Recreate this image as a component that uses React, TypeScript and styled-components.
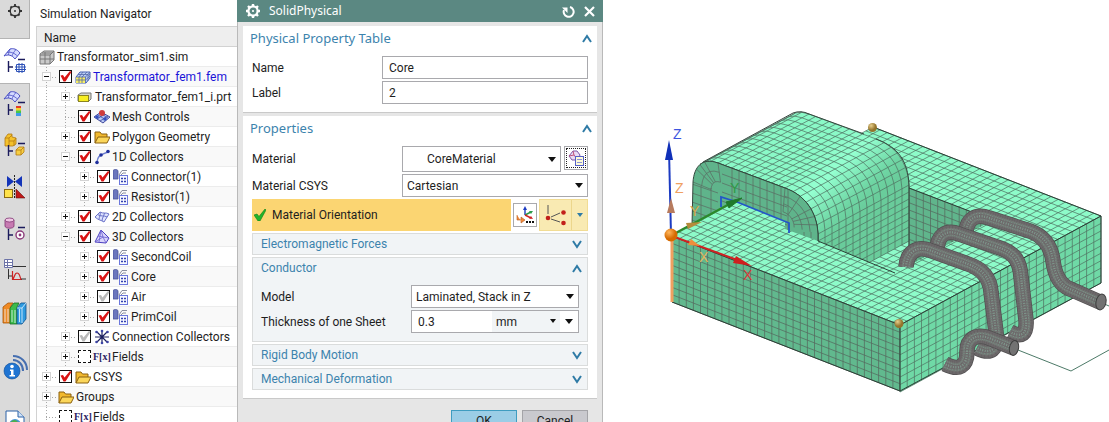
import React from "react";
import styled, { createGlobalStyle, css } from "styled-components";

const GlobalStyle = createGlobalStyle`
  *, *::before, *::after { box-sizing: border-box; }
  body {
    margin: 0;
    background: #fff;
    color: #1e1e1e;
    font: 12px/20px Roboto, "Noto Sans", sans-serif;
  }
  button, input, select { font: inherit; color: inherit; margin: 0; }
`;

const Page = styled.div`
  display: flex;
  align-items: stretch;
  height: 100vh;
  overflow: hidden;
`;

/* ---------- resource bar ---------- */

const ResourceBar = styled.nav`
  flex: none;
  display: flex;
  flex-direction: column;
  width: 30px;
  background: #dadada;
  border-right: 1px solid #b4b4b4;
`;

const ResourceTab = styled.button<{ $active?: boolean; $tall?: number }>`
  flex: none;
  display: grid;
  place-items: center;
  width: 100%;
  height: ${(p) => p.$tall ?? 42}px;
  padding: 0;
  border: 0;
  background: ${(p) => (p.$active ? "#fff" : "transparent")};
  ${(p) =>
    p.$active &&
    css`
      width: 30px;
      border-top: 1px solid #b4b4b4;
      border-bottom: 1px solid #b4b4b4;
    `}
  svg { display: block; overflow: visible; }
`;

/* ---------- navigator ---------- */

const Navigator = styled.section`
  flex: none;
  width: 207px;
  padding-left: 6px;
  background: #fff;
`;

const NavTitle = styled.h1`
  margin: 0;
  padding: 4px 4px 2px;
  height: 26px;
  font-size: 12px;
  font-weight: 400;
  line-height: 20px;
`;

const NavHeader = styled.div`
  height: 21px;
  padding-left: 7px;
  border: 1px solid #d2d2d2;
  border-right: 0;
  background: #eeeeee;
  line-height: 22px;
`;

const Tree = styled.ul`
  margin: 0;
  padding: 0;
  list-style: none;
  border-left: 1px solid #d2d2d2;
`;

const TreeRow = styled.li<{ $alt: boolean }>`
  display: flex;
  align-items: center;
  height: 20px;
  background: ${(p) => (p.$alt ? "#f9f9f9" : "#fff")};
  border-bottom: 1px solid #ececec;
  white-space: nowrap;
`;

const Guide = styled.span<{ $line?: boolean; $end?: boolean }>`
  flex: none;
  display: grid;
  place-items: center;
  width: 19px;
  height: 20px;
  ${(p) =>
    p.$line &&
    css`
      background: repeating-linear-gradient(#a8a8a8 0 1px, transparent 1px 3px) 9px 0 / 1px 100% no-repeat;
    `}
  ${(p) =>
    p.$end &&
    css`
      background:
        repeating-linear-gradient(#a8a8a8 0 1px, transparent 1px 3px) 9px 0 / 1px 100% no-repeat,
        repeating-linear-gradient(90deg, #a8a8a8 0 1px, transparent 1px 3px) 9px 10px / 10px 1px no-repeat;
    `}
`;

const Expander = styled.button`
  width: 9px;
  height: 9px;
  padding: 0;
  border: 1px solid #d4d4d4;
  background: #fff;
  svg { display: block; }
`;

const Tick = styled.label<{ $dotted?: boolean }>`
  flex: none;
  display: grid;
  width: 13px;
  height: 13px;
  margin: 0 1px 0 3px;
  input, svg { grid-area: 1 / 1; }
  input {
    appearance: none;
    width: 13px;
    height: 13px;
    background: #fff;
    border: ${(p) => (p.$dotted ? "1px dashed #111" : "1px solid #111")};
  }
  svg { z-index: 1; pointer-events: none; }
`;

const IconSlot = styled.span`
  flex: none;
  display: grid;
  place-items: center;
  width: 17px;
  height: 17px;
  margin: 0 1px;
  svg { display: block; }
`;

const TreeText = styled.span<{ $blue?: boolean }>`
  padding-left: 1px;
  line-height: 22px;
  color: ${(p) => (p.$blue ? "#1a14d8" : "#1e1e1e")};
`;

const Fx = styled.span`
  font: bold 10px/16px "Liberation Serif", serif;
  color: #2b1d63;
`;

/* ---------- dialog ---------- */

const Dialog = styled.form`
  flex: none;
  display: flex;
  flex-direction: column;
  width: 366px;
  background: #e6e6e6;
  border-left: 1px solid #b9b9b9;
  border-right: 1px solid #b9b9b9;
`;

const TitleBar = styled.header`
  flex: none;
  display: flex;
  align-items: center;
  height: 22px;
  margin: 0 -1px;
  padding: 0 8px 0 9px;
  gap: 9px;
  background: #5b8882;
  color: #fff;
  svg { display: block; }
`;

const TitleText = styled.h2`
  flex: 1;
  margin: 0;
  font: 400 12px/20px "Noto Sans", sans-serif;
`;

const BareButton = styled.button`
  display: grid;
  place-items: center;
  padding: 0;
  border: 0;
  background: none;
  color: inherit;
`;

const Panels = styled.div`
  display: flex;
  flex-direction: column;
  gap: 3px;
  padding: 4px 5px 11px;
`;

const Panel = styled.section`
  padding: 0 9px 8px;
  background: #fff;
  border-bottom: 1px solid #c9c9c9;
`;

const PanelHead = styled.div`
  display: flex;
  align-items: center;
  justify-content: space-between;
  height: 24px;
  margin: 0 -4px 6px -2px;
  color: #3c83ad;
  h3 { margin: 0; font: 400 13px/24px "Noto Sans", sans-serif; }
`;

const Rows = styled.div`
  display: flex;
  flex-direction: column;
  gap: 2px;
`;

const Row = styled.div<{ $split: number }>`
  display: grid;
  grid-template-columns: ${(p) => p.$split}px minmax(0, 1fr);
  align-items: center;
`;

const fieldBox = css`
  width: 100%;
  height: 23px;
  border: 1px solid #a9a9ad;
  border-radius: 0;
  background: #fff;
  outline: 0;
`;

const TextBox = styled.input`
  ${fieldBox}
  padding: 0 6px;
`;

const Pair = styled.div`
  display: grid;
  grid-template-columns: 1fr 24px;
  gap: 3px;
`;

const SelectWrap = styled.span<{ $pad?: number; $h?: number }>`
  display: grid;
  align-items: center;
  select, svg { grid-area: 1 / 1; }
  select {
    ${fieldBox}
    height: ${(p) => p.$h ?? 23}px;
    padding: 0 20px 0 ${(p) => p.$pad ?? 4}px;
    appearance: none;
  }
  svg { justify-self: end; margin-right: 5px; pointer-events: none; }
`;

const ToolButton = styled.button<{ $dotted?: boolean }>`
  display: grid;
  place-items: center;
  width: 24px;
  height: 24px;
  padding: 0;
  border: 1px solid #a9a9ad;
  background: #fff;
  outline: ${(p) => (p.$dotted ? "1px dotted #222" : "0")};
  outline-offset: -3px;
`;

const PickRow = styled.div`
  display: grid;
  grid-template-columns: 1fr 24px 49px;
  gap: 2px;
  align-items: center;
  height: 32px;
`;

const PickLabel = styled.div`
  display: flex;
  align-items: center;
  gap: 6px;
  height: 32px;
  padding-left: 2px;
  background: #fbd572;
`;

const SplitButton = styled.div`
  display: grid;
  grid-template-columns: 31px 1fr;
  height: 32px;
  border: 1px solid #f1dc94;
  background: #f9eab2;
  button + button { border-left: 1px solid #ecd68c; }
`;

const Group = styled.section`
  border: 1px solid #dadcdc;
  background: #f1f4f6;
`;

const GroupHead = styled.div`
  display: flex;
  align-items: center;
  justify-content: space-between;
  height: 20px;
  padding: 0 5px 0 8px;
  color: #3c83ad;
  h4 { margin: 0; font-size: 12px; font-weight: 400; }
`;

const GroupBody = styled(Rows)`
  padding: 7px 8px 8px;
`;

const UnitField = styled.div`
  display: grid;
  grid-template-columns: 80px 1fr 18px;
  ${fieldBox}
  input { min-width: 0; border: 0; padding: 0 6px; background: none; outline: 0; height: 21px; }
  ${SelectWrap} select { height: 21px; border: 0; background: #f1f4f6; }
  ${SelectWrap} svg { margin-right: 3px; }
`;

const Actions = styled.footer`
  display: flex;
  justify-content: flex-end;
  gap: 5px;
  padding-right: 14px;
`;

const ActionButton = styled.button<{ $primary?: boolean }>`
  width: 66px;
  height: 22px;
  padding: 0;
  line-height: 20px;
  border: 1px solid ${(p) => (p.$primary ? "#3f9cc0" : "#a4a4a8")};
  background: ${(p) => (p.$primary ? "#9bcde6" : "#c9c9ce")};
`;

const Viewport = styled.main`
  flex: 1;
  min-width: 0;
  background: #fff;
  svg { display: block; width: 100%; }
`;

/* ---------- small drawings ---------- */

const Chevron = ({ up }: { up?: boolean }) => (
  <svg width="10" height="9" viewBox="0 0 10 9" fill="none" stroke="#2f7ba6" strokeWidth="2">
    <path d={up ? "M1 8 5 2 9 8" : "M1 1 5 7 9 1"} />
  </svg>
);

const Caret = ({ color = "#111", small = false }) => (
  <svg width="8" height="5" viewBox="0 0 8 5">
    <path d={small ? "M1 0H7L4 4Z" : "M0 0H8L4 5Z"} fill={color} />
  </svg>
);

const Gear = ({ color }: { color: string }) => (
  <svg width="14" height="14" viewBox="0 0 14 14" fill="none" stroke={color}>
    <circle cx="7" cy="7" r="4.6" strokeWidth="2.2" />
    <circle cx="7" cy="7" r="1.1" fill={color} stroke="none" />
    <path d="M7 0V2M7 12V14M0 7H2M12 7H14M2 2 3.6 3.6M10.4 10.4 12 12M12 2 10.4 3.6M2 12 3.6 10.4" strokeWidth="2.4" />
  </svg>
);

const Mark = ({ grey }: { grey?: boolean }) => (
  <svg width="13" height="13" viewBox="0 0 13 13">
    <path d="M1.500 5.500 4 5 5.500 7.500 11 1 12.500 2 6.500 11.500H4.500Z" fill={grey ? "#b9b9b9" : "#d91414"} />
  </svg>
);

const meshTop = (
  <g>
    <path d="M0 7 6 0C9 -1 13 0 16 4L11 10C8 6 4 5 0 7Z" fill="#d5dbff" stroke="#4a4fc4" />
    <path d="M3 3.500C7 2.500 10 4 13.500 7M6 0C5 2 4.500 4 4.500 6M11.500 1C10 3 8.500 5 8 7" fill="none" stroke="#4a4fc4" strokeWidth=".8" />
  </g>
);

const navBranch = <path d="M14 10.500H21M4.500 12V23M4 18H9" stroke="#1b1b5c" strokeWidth="1.400" fill="none" />;

const BarIcon = ({ kind }: { kind: string }) => {
  const art: Record<string, React.ReactNode> = {
    sim: (
      <>
        {meshTop}
        {navBranch}
        <path d="M12.500 15.500H20.500V22.500H12.500ZM15 14V24M18 14V24M11 18H22M11 20.500H22" fill="none" stroke="#2e52b8" />
      </>
    ),
    post: (
      <>
        {meshTop}
        {navBranch}
        <path d="M12 14H17V17H12Z" fill="#e33b28" />
        <path d="M12 16H17V19H12Z" fill="#f2d22e" />
        <path d="M12 18.500H17V21H12Z" fill="#46c64b" />
        <path d="M12 21H17V24H12Z" fill="#3f9bea" />
      </>
    ),
    part: (
      <>
        <path d="M1 5 4 1H8V4L12 5V11L9 13H1Z" fill="#f5c22c" stroke="#b27a12" strokeWidth=".8" />
        <path d="M1 5H5V13M5 8H10V13M5 5 8 2M10 8 12 5" fill="none" stroke="#b27a12" strokeWidth=".8" />
        {navBranch}
        <path d="M12 17 15 14H20V19L17 22H12ZM12 17H17V22M17 17 20 14" fill="#f7cf44" stroke="#b27a12" strokeWidth=".8" />
      </>
    ),
    mirror: (
      <>
        <path d="M3 1V12L10 6.500Z M18 1V12L11 6.500Z" fill="#1434b8" />
        <path d="M10.500 0V24" stroke="#222" strokeDasharray="2 1" />
        <rect x="0.500" y="14.500" width="8" height="8" fill="#ffe34a" stroke="#8a6a10" />
        <path d="M12 14V23H21Z" fill="#c01818" stroke="#611" strokeWidth=".6" />
      </>
    ),
    disk: (
      <>
        <path d="M1 3V9C1 12 10 12 10 9V3" fill="#c77bb2" stroke="#7d3470" strokeWidth=".8" />
        <ellipse cx="5.500" cy="3" rx="4.500" ry="2" fill="#efc6e4" stroke="#7d3470" strokeWidth=".8" />
        {navBranch}
        <circle cx="16" cy="18" r="4" fill="#fff" stroke="#8b3a7a" strokeWidth="1.400" />
        <circle cx="16" cy="18" r="1.400" fill="#8b3a7a" />
      </>
    ),
    graph: (
      <>
        <path d="M0.500 0.500H8.500V8.500H0.500ZM0.500 3.500H8.500M0.500 6.500H8.500M3.500 1V8" fill="#fff" stroke="#6d74a8" />
        <path d="M9 7.500H22M4.500 10V20M4 17H8" stroke="#333" fill="none" />
        <path d="M8.500 20C11 19 10 14 13 14S16 19 17 20M8.500 12V20.500H18" fill="none" stroke="#c22" strokeWidth="1.200" />
        <path d="M17 20H22" stroke="#333" />
      </>
    ),
    books: (
      <>
        <path d="M-1 5 4 1H9L7 4V21H-1Z" fill="#f08a24" stroke="#a85508" strokeWidth=".8" />
        <path d="M6 6 10 1H15L13 5V22H6Z" fill="#3cbb4a" stroke="#176d24" strokeWidth=".8" />
        <path d="M13 6 17 1H22V17L18 22H13Z" fill="#2f9be0" stroke="#0d4f8a" strokeWidth=".8" />
        <path d="M1 7V20M4 7V20M8 8V20M11 8V21M15.500 7V20M13 6H18L22 1M18 6V21" stroke="#e8f4ff" strokeWidth=".8" fill="none" />
      </>
    ),
    info: (
      <>
        <circle cx="8" cy="15" r="8" fill="#1f74d2" stroke="#0e4b96" strokeWidth=".6" />
        <circle cx="8" cy="10.500" r="1.800" fill="#fff" />
        <path d="M6 13.500H9.500V19H11V20.500H5.500V19H7V15H6Z" fill="#fff" />
        <path d="M9 4C15 4 19 9 19 15M9 0C17 0 23 6 23 14" fill="none" stroke="#466fb0" strokeWidth="2" />
      </>
    ),
    web: (
      <>
        <path d="M2 0H14L20 6V24H2Z" fill="#fff" stroke="#2d63a8" />
        <path d="M14 0V6H20" fill="#cfe2f7" stroke="#2d63a8" />
        <circle cx="11" cy="14" r="6" fill="#4795d6" />
        <path d="M6 12C9 7 14 9 14 12S8 13 9 18Z" fill="#4cae4f" />
      </>
    ),
  };
  return (
    <svg width="22" height="24" viewBox="0 0 22 24">
      {art[kind]}
    </svg>
  );
};

const TreeIcon = ({ kind }: { kind: string }) => {
  const art: Record<string, React.ReactNode> = {
    sim: (
      <>
        <path d="M1 5 5 2H15V11L11 15H1Z" fill="#c9c9c9" stroke="#777" />
        <path d="M1 6H11V15M11 6 15 2M6 3V15M1 10H15M3 4H13" fill="none" stroke="#777" />
      </>
    ),
    fem: (
      <>
        <path d="M5 3H15V9L11 14H1V8Z" fill="#bcd0f5" stroke="#4763b5" />
        <path d="M1 8H10V14H1Z" fill="#f7ee63" />
        <path d="M1 8H10.500V14M1 11H10.500M4 8V14M7 8V14M3 5.500H13V12M10.500 8 15 3M13 6.500 15 5M4 8 8 3M7 8 12 3M10.500 11 15 7" fill="none" stroke="#5468a8" strokeWidth=".8" />
      </>
    ),
    prt: (
      <>
        <path d="M1 6 4 4H14V10L12 12H1Z" fill="#d8d8c8" stroke="#777" />
        <rect x="1.500" y="6.500" width="10" height="6" fill="#f7ee23" stroke="#8b8420" />
      </>
    ),
    controls: (
      <>
        <path d="M0 8 7 3 16 8 9 14Z" fill="#b9c7f2" stroke="#414a9c" />
        <path d="M3 10 11 5M6 12 14 7M4 6 12 11M7 4.500 14 9" stroke="#414a9c" strokeWidth=".8" />
        <circle cx="8" cy="4" r="3" fill="#cf3b3b" />
        <circle cx="11" cy="10" r="1.800" fill="#334fc0" />
        <circle cx="3" cy="8" r="1.800" fill="#334fc0" />
      </>
    ),
    folder: (
      <>
        <path d="M1 14V3H6L7.500 5H13V8" fill="#f2b92e" stroke="#8a6010" />
        <path d="M1 14 4 8H16L13 14Z" fill="#fbd65a" stroke="#8a6010" />
      </>
    ),
    d1: (
      <>
        <path d="M3 13C3 8 7 5 14 3" fill="none" stroke="#6d7fd0" strokeWidth="1.400" />
        <g fill="#1f2f9c">
          <circle cx="3" cy="13.500" r="1.800" />
          <circle cx="7" cy="6" r="1.800" />
          <circle cx="14" cy="2.500" r="1.800" />
        </g>
      </>
    ),
    d2: (
      <>
        <path d="M1 8 6 3C9 5 12 3 15 5L10 13C7 11 4 11 1 8Z" fill="#dfe4ff" stroke="#6a72c8" />
        <path d="M3.500 5.500C7 8 10 6 13 8M6 3C7 6 5 8 5 10.500M10.500 4C10 7 8 9 8 12" fill="none" stroke="#6a72c8" />
      </>
    ),
    d3: (
      <>
        <path d="M7 1 15 9 12 14 1 13Z" fill="#d9d4fb" stroke="#4b3fc0" />
        <path d="M7 1 9 8 12 14M1 13 9 8 15 9M4 7 9 8M7 1 5 13" fill="none" stroke="#6a60d0" strokeWidth=".8" />
      </>
    ),
    mesh: (
      <>
        <path d="M0 2C0 0 5 0 5 2V10H0Z" fill="#6b76bd" stroke="#49549b" strokeWidth=".8" />
        <path d="M6 6 9 1.500H14M6 8 10 4H13" stroke="#8a8f9e" fill="none" />
        <rect x="6.500" y="6.500" width="8" height="9" fill="#f6f8ff" stroke="#6c78dc" />
        <path d="M8 9.500H10M11 9.500H13M8 12.500H10M11 12.500H13" stroke="#3441b0" strokeWidth="1.500" />
      </>
    ),
    star: (
      <>
        <path d="M8 1V15M1 8H15M3 3 13 13M13 3 3 13" stroke="#1c1f5e" strokeWidth="1.200" />
        <g fill="#3d45a4">
          <circle cx="8" cy="2" r="1.300" />
          <circle cx="8" cy="14" r="1.300" />
          <circle cx="2.500" cy="3" r="1.300" />
          <circle cx="13.500" cy="3" r="1.300" />
          <circle cx="2.500" cy="13" r="1.300" />
          <circle cx="13.500" cy="13" r="1.300" />
        </g>
      </>
    ),
  };
  if (kind === "fx") return <Fx>F[x]</Fx>;
  return (
    <svg width="16" height="16" viewBox="0 0 16 16">
      {art[kind]}
    </svg>
  );
};

/* ---------- finite element model ---------- */

type P = [number, number];
const at = (o: P, u: P, v: P, a: number, b: number): P => [o[0] + u[0] * a + v[0] * b, o[1] + u[1] * a + v[1] * b];
const seg = (a: P, b: P) => `M${a[0].toFixed(1)} ${a[1].toFixed(1)}L${b[0].toFixed(1)} ${b[1].toFixed(1)}`;
const poly = (pts: P[]) => "M" + pts.map((p) => `${p[0].toFixed(1)} ${p[1].toFixed(1)}`).join("L");

const Face = ({ o, u, v, nu, nv, fill, line = "#527564" }: { o: P; u: P; v: P; nu: number; nv: number; fill: string; line?: string }) => {
  let d = "";
  for (let i = 0; i <= nu; i++) d += seg(at(o, u, v, i / nu, 0), at(o, u, v, i / nu, 1));
  for (let j = 0; j <= nv; j++) d += seg(at(o, u, v, 0, j / nv), at(o, u, v, 1, j / nv));
  return (
    <g>
      <path d={poly([o, at(o, u, v, 1, 0), at(o, u, v, 1, 1), at(o, u, v, 0, 1)]) + "Z"} fill={fill} />
      <path d={d} stroke={line} strokeWidth=".75" fill="none" />
    </g>
  );
};

const bez = (a: P, b: P, c: P, d: P, n: number): P[] =>
  Array.from({ length: n + 1 }, (_, i) => {
    const t = i / n;
    const s = 1 - t;
    const f = (k: 0 | 1) => s * s * s * a[k] + 3 * s * s * t * b[k] + 3 * s * t * t * c[k] + t * t * t * d[k];
    return [f(0), f(1)] as P;
  });
const straight = (a: P, b: P, n: number): P[] =>
  Array.from({ length: n + 1 }, (_, i) => [a[0] + ((b[0] - a[0]) * i) / n, a[1] + ((b[1] - a[1]) * i) / n] as P);

const leftArc = bez([693, 182], [694, 167], [702, 157], [718, 163], 6);
const flat = straight([718, 163], [785, 188], 10);
const rightArc = bez([785, 188], [805, 195], [817, 212], [818, 234], 7);
const wall = straight([818, 234], [818, 290], 8);
const E: P = [91, -49];
const shell = [...leftArc.slice(3), ...flat.slice(1), ...rightArc.slice(1), ...wall.slice(1)];
const shift = (p: P, k: number): P => [p[0] + E[0] * k, p[1] + E[1] * k];

const shellLines =
  shell.map((p) => seg(p, shift(p, 1))).join("") +
  Array.from({ length: 14 }, (_, i) => poly(shell.map((p) => shift(p, i / 13)))).join("");

/* mesh of the leg's front: two fans at the rounded corners, a regular band between them */
const capCells = (() => {
  let d = "";
  const toward = (p: P, c: P, k: number): P => [p[0] + (c[0] - p[0]) * k, p[1] + (c[1] - p[1]) * k];
  const cl: P = [722, 194];
  const cr: P = [782, 224];
  for (let i = 2; i <= 10; i++) d += seg([718 + i * 7, 163 + i * 2.6], [718 + i * 7, 240]);
  for (let j = 1; j < 6; j++) d += seg([722, 165 + j * 9], [787, 189 + j * 9]);
  for (const p of leftArc.filter((_, i) => i % 2 === 0 || i === 3)) d += seg(p, toward(p, cl, 0.62));
  for (const p of rightArc.filter((_, i) => i % 2 === 0 || i === 5)) d += seg(p, toward(p, cr, 0.66));
  for (const k of [0.3, 0.62]) d += poly(leftArc.map((p) => toward(p, cl, k)));
  for (const k of [0.22, 0.44, 0.66]) d += poly(rightArc.map((p) => toward(p, cr, k)));
  for (let j = 0; j < 5; j++) d += seg([692, 184 + j * 9], [718, 193 + j * 9]);
  return d + "M701 186V225M711 188V225M804 232V245M811 232V245";
})();

const coils = [
  "M966 232C967 219 976 213 989 218L1030 231C1044 236 1051 246 1053 261C1055 276 1060 285 1070 289L1102 303",
  "M937 251C937 235 946 229 959 234L1000 248C1015 253 1020 262 1021 277L1026 320C1027 334 1022 338 1010 332",
  "M906 267C907 252 917 246 929 250L968 264C983 269 990 279 991 292L996 332C998 350 991 355 977 348",
  "M1014 348 989 338C975 333 967 340 967 351C967 367 959 371 945 364",
];

const Coil = ({ d }: { d: string }) => (
  <g fill="none">
    <path d={d} stroke="#525051" strokeWidth="15.500" />
    <path d={d} stroke="#6c686a" strokeWidth="14" />
    <path d={d} stroke="#737875" strokeWidth="9" />
    <path d={d} stroke="#86a597" strokeWidth="7" strokeDasharray=".8 1.700" />
    <path d={d} stroke="#6f6c6d" strokeWidth="4.400" />
    <path d={d} stroke="#8db3a2" strokeWidth="2.400" strokeDasharray=".8 1.700" />
    <path d={d} stroke="#504d4e" strokeWidth="13" strokeDasharray=".5 2" opacity=".35" />
  </g>
);

const Model = () => (
  <svg viewBox="603 0 506 422" preserveAspectRatio="xMinYMin meet" role="img" aria-label="Transformer mesh">
    <defs>
      <linearGradient id="shell" gradientUnits="userSpaceOnUse" x1="800" y1="168" x2="850" y2="222">
        <stop offset="0" stopColor="#8af9c7" />
        <stop offset=".35" stopColor="#94ffd0" />
        <stop offset=".8" stopColor="#6fd6a4" />
        <stop offset="1" stopColor="#69cc9b" />
      </linearGradient>
      <radialGradient id="orange" cx=".35" cy=".3">
        <stop offset="0" stopColor="#ffb65c" />
        <stop offset="1" stopColor="#d66a00" />
      </radialGradient>
      <radialGradient id="gold" cx=".35" cy=".3">
        <stop offset="0" stopColor="#e8cf8c" />
        <stop offset="1" stopColor="#94742c" />
      </radialGradient>
      <clipPath id="cap">
        <path d="M692 226 693 182C694 167 702 157 718 163L785 188C805 195 817 212 818 234V241L785 229V221L735 201Z" />
      </clipPath>
      <clipPath id="window">
        <path d="M818 240 895 273 993 220 909 188 862 150 818 190Z" />
      </clipPath>
      <clipPath id="above">
        <path d="M680 90H910V266L895 273 818 241 780 225H680Z" />
      </clipPath>
    </defs>

    <path d="M1018 350 1071 371 1109 350M1100 302 1109 306" fill="none" stroke="#4d7a68" />

    <Face o={[672, 236]} u={[228, 89]} v={[201, -109]} nu={32} nv={28} fill="#8dfbc9" />
    <Face o={[672, 236]} u={[228, 89]} v={[0, 66]} nu={32} nv={9} fill="#61b98e" line="#56695f" />
    <Face o={[900, 325]} u={[201, -109]} v={[0, 67]} nu={28} nv={9} fill="#6fd9a6" />

    <g clipPath="url(#window)">
      <Face o={[909, 188]} u={[86, 33]} v={[0, 88]} nu={12} nv={12} fill="#60b58c" line="#56695f" />
    </g>

    <g clipPath="url(#above)">
      <path d={poly([...shell, ...[...shell].reverse().map((p) => shift(p, 1))]) + "Z"} fill="url(#shell)" />
      <path d={shellLines} fill="none" stroke="#527564" strokeWidth=".75" />
      <path d={poly(shell)} fill="none" stroke="#33473d" />
      <path d="M703 162 793 113Q801 110 809 114L864 134M876 139C898 147 908 161 909 185V247" fill="none" stroke="#33473d" />
    </g>
    <g clipPath="url(#cap)">
      <rect x="690" y="155" width="130" height="90" fill="#5fb48b" />
      <path d={capCells} fill="none" stroke="#5b6e64" strokeWidth=".75" />
    </g>
    <path d="M692 226 693 182C694 167 702 157 718 163L785 188C805 195 817 212 818 234V241" fill="none" stroke="#33473d" />

    <path d="M672 236 900 325 1101 216V283L900 391 672 302M900 325V391M873 127 1101 216M818 241 895 273M909 188 972 212" fill="none" stroke="#2c3f36" />

    {coils.map((d) => (
      <Coil key={d} d={d} />
    ))}
    <g stroke="#3d3d3d" fill="#727272">
      <ellipse cx="1101" cy="302" rx="5" ry="8" transform="rotate(12 1101 302)" />
      <ellipse cx="1014" cy="348" rx="4.500" ry="7.500" transform="rotate(12 1014 348)" />
    </g>

    <path d="M721 207V197L737 202M737 202 789 223V233" fill="none" stroke="#2355c8" strokeWidth="1.800" />

    <path d="M672 236V302" stroke="#f0a060" strokeWidth="3" />
    <path d="M671 235 669 150" stroke="#1c3bc2" strokeWidth="2" />
    <path d="M669 140 665 160H673Z" fill="#1030b8" />
    <path d="M671 198 667 213H675Z" fill="#b77b5e" />
    <path d="M672 235 735 201" stroke="#2a8a2a" strokeWidth="2" />
    <path d="M742 198 726 202 729 208Z" fill="#1f7a2a" stroke="#1f7a2a" />
    <path d="M702 222 686 223 688 229Z" fill="#b58a3c" />
    <path d="M672 236 740 261" stroke="#cf2222" strokeWidth="2" />
    <path d="M752 266 733 263 736 256Z" fill="#cf1f1f" />
    <path d="M700 246 688 245 691 239Z" fill="#ef8f3c" />
    <circle cx="671" cy="235" r="6.500" fill="url(#orange)" />
    <circle cx="872.500" cy="127.500" r="4.500" fill="url(#gold)" />
    <circle cx="899" cy="323.500" r="4.500" fill="url(#gold)" />

    <g fontFamily="Liberation Sans, sans-serif" fontSize="14">
      <text x="673" y="139" fill="#3c55e0">Z</text>
      <text x="675" y="193" fill="#f0a060">Z</text>
      <text x="690" y="216" fill="#d8a548">Y</text>
      <text x="730" y="193" fill="#2f9a48">Y</text>
      <text x="699" y="262" fill="#e3b45c">X</text>
      <text x="743" y="280" fill="#d93a3a">X</text>
    </g>
  </svg>
);

/* ---------- data ---------- */

type Node = {
  text: string;
  level: number;
  icon: string;
  exp?: "+" | "-";
  check?: "red" | "grey" | "none";
  blue?: boolean;
};

const nodes: Node[] = [
  { text: "Transformator_sim1.sim", level: 0, icon: "sim" },
  { text: "Transformator_fem1.fem", level: 1, icon: "fem", exp: "-", check: "red", blue: true },
  { text: "Transformator_fem1_i.prt", level: 2, icon: "prt", exp: "+" },
  { text: "Mesh Controls", level: 2, icon: "controls", check: "red" },
  { text: "Polygon Geometry", level: 2, icon: "folder", exp: "+", check: "red" },
  { text: "1D Collectors", level: 2, icon: "d1", exp: "-", check: "red" },
  { text: "Connector(1)", level: 3, icon: "mesh", exp: "+", check: "red" },
  { text: "Resistor(1)", level: 3, icon: "mesh", exp: "+", check: "red" },
  { text: "2D Collectors", level: 2, icon: "d2", exp: "+", check: "red" },
  { text: "3D Collectors", level: 2, icon: "d3", exp: "-", check: "red" },
  { text: "SecondCoil", level: 3, icon: "mesh", exp: "+", check: "red" },
  { text: "Core", level: 3, icon: "mesh", exp: "+", check: "red" },
  { text: "Air", level: 3, icon: "mesh", exp: "+", check: "grey" },
  { text: "PrimCoil", level: 3, icon: "mesh", exp: "+", check: "red" },
  { text: "Connection Collectors", level: 2, icon: "star", exp: "+", check: "grey" },
  { text: "Fields", level: 2, icon: "fx", exp: "+", check: "none" },
  { text: "CSYS", level: 1, icon: "folder", exp: "+", check: "red" },
  { text: "Groups", level: 1, icon: "folder", exp: "+" },
  { text: "Fields", level: 1, icon: "fx", check: "none" },
];

const tabs = [
  { kind: "sim", label: "Simulation Navigator", active: true, tall: 46 },
  { kind: "post", label: "Post Processing Navigator", tall: 40 },
  { kind: "part", label: "Part Navigator" },
  { kind: "mirror", label: "Symmetry" },
  { kind: "disk", label: "Assembly Navigator" },
  { kind: "graph", label: "XY Function Navigator" },
  { kind: "books", label: "Reuse Library", tall: 44 },
  { kind: "info", label: "HD3D Tools", tall: 64 },
  { kind: "web", label: "Web Browser", tall: 46 },
];

const TreeNode = ({ node, index }: { node: Node; index: number }) => (
  <TreeRow $alt={index % 2 === 1}>
    {Array.from({ length: node.level }, (_, i) => (
      <Guide key={i} $line={i < node.level - 1} $end={i === node.level - 1}>
        {i === node.level - 1 && node.exp && (
          <Expander type="button" aria-label={node.exp === "+" ? "Expand" : "Collapse"}>
            <svg width="7" height="7" viewBox="0 0 7 7">
              <path d={node.exp === "+" ? "M1 3.500H6M3.500 1V6" : "M1 3.500H6"} stroke="#111" />
            </svg>
          </Expander>
        )}
      </Guide>
    ))}
    {node.check && (
      <Tick $dotted={node.check === "none"}>
        <input type="checkbox" aria-label={node.text} defaultChecked={node.check === "red"} />
        {node.check !== "none" && <Mark grey={node.check === "grey"} />}
      </Tick>
    )}
    <IconSlot>
      <TreeIcon kind={node.icon} />
    </IconSlot>
    <TreeText $blue={node.blue}>{node.text}</TreeText>
  </TreeRow>
);

const Collapsed = ({ title }: { title: string }) => (
  <Group>
    <GroupHead>
      <h4>{title}</h4>
      <BareButton type="button" aria-label={`Expand ${title}`}>
        <Chevron />
      </BareButton>
    </GroupHead>
  </Group>
);

const Head = ({ title }: { title: string }) => (
  <PanelHead>
    <h3>{title}</h3>
    <BareButton type="button" aria-label={`Collapse ${title}`}>
      <Chevron up />
    </BareButton>
  </PanelHead>
);

export default function App() {
  return (
    <>
      <GlobalStyle />
      <Page>
        <ResourceBar>
          <ResourceTab $tall={38} aria-label="Settings">
            <svg width="14" height="30" viewBox="0 0 14 30" fill="none" stroke="#333">
              <circle cx="7" cy="7" r="4.800" strokeWidth="1.400" />
              <circle cx="7" cy="7" r="1" fill="#333" stroke="none" />
              <path d="M7 0V2.500M7 11.500V14M0 7H2.500M11.500 7H14M2.500 2.500 3.500 3.500M10.500 10.500 11.500 11.500M11.500 2.500 10.500 3.500M2.500 11.500 3.500 10.500" strokeWidth="1.800" />
            </svg>
          </ResourceTab>
          {tabs.map((t) => (
            <ResourceTab key={t.kind} $active={t.active} $tall={t.tall} aria-label={t.label}>
              <BarIcon kind={t.kind} />
            </ResourceTab>
          ))}
        </ResourceBar>

        <Navigator>
          <NavTitle>Simulation Navigator</NavTitle>
          <NavHeader>Name</NavHeader>
          <Tree>
            {nodes.map((n, i) => (
              <TreeNode key={i} node={n} index={i} />
            ))}
          </Tree>
        </Navigator>

        <Dialog onSubmit={(e) => e.preventDefault()}>
          <TitleBar>
            <Gear color="#fff" />
            <TitleText>SolidPhysical</TitleText>
            <BareButton type="button" aria-label="Reset">
              <svg width="13" height="13" viewBox="0 0 13 13" fill="none" stroke="#fff" strokeWidth="2">
                <path d="M8 2A5 5 0 1 1 2 5" />
                <path d="M0 2.500H5.500V8Z" fill="#fff" stroke="none" />
              </svg>
            </BareButton>
            <BareButton type="button" aria-label="Close">
              <svg width="11" height="11" viewBox="0 0 11 11" stroke="#fff" strokeWidth="2.200">
                <path d="M1 1 10 10M10 1 1 10" />
              </svg>
            </BareButton>
          </TitleBar>

          <Panels>
            <Panel>
              <Head title="Physical Property Table" />
              <Rows>
                <Row $split={130}>
                  <label htmlFor="name">Name</label>
                  <TextBox id="name" defaultValue="Core" />
                </Row>
                <Row $split={130}>
                  <label htmlFor="label">Label</label>
                  <TextBox id="label" defaultValue="2" />
                </Row>
              </Rows>
            </Panel>

            <Panel>
              <Head title="Properties" />
              <Rows>
                <Row $split={150}>
                  <label htmlFor="material">Material</label>
                  <Pair>
                    <SelectWrap $pad={24} $h={26}>
                      <select id="material">
                        <option>CoreMaterial</option>
                      </select>
                      <Caret />
                    </SelectWrap>
                    <ToolButton type="button" $dotted aria-label="Choose material">
                      <svg width="16" height="16" viewBox="0 0 16 16">
                        <path d="M5 1H9L12 5 10 10H4L1 6Z" fill="#eadcf4" stroke="#7a56a8" />
                        <path d="M1 6 6 5 5 1M6 5 9 9" fill="none" stroke="#c0507a" />
                        <rect x="7.500" y="6.500" width="8" height="9" fill="#fdfbd8" stroke="#5560c8" />
                        <path d="M9 9.500H14M9 12.500H14" stroke="#8b92d8" />
                      </svg>
                    </ToolButton>
                  </Pair>
                </Row>
                <Row $split={150}>
                  <label htmlFor="csys">Material CSYS</label>
                  <SelectWrap>
                    <select id="csys">
                      <option>Cartesian</option>
                    </select>
                    <Caret />
                  </SelectWrap>
                </Row>
                <PickRow>
                  <PickLabel>
                    <svg width="12" height="12" viewBox="0 0 12 12">
                      <path d="M0 6 3 5 5 7.500 11 0 12 1 6 12H4Z" fill="#21b52a" stroke="#0d7d16" strokeWidth=".6" />
                    </svg>
                    Material Orientation
                  </PickLabel>
                  <ToolButton type="button" aria-label="CSYS dialog">
                    <svg width="18" height="18" viewBox="0 0 18 18" fill="none">
                      <path d="M9 9V2" stroke="#1c3bc2" strokeWidth="1.400" />
                      <path d="M7 4 9 0 11 4Z" fill="#1c3bc2" />
                      <path d="M9 9 15 6" stroke="#2c9a4a" strokeWidth="1.400" />
                      <path d="M17 5 13 5 15 8Z" fill="#2c9a4a" />
                      <path d="M9 9 15 12" stroke="#cf2222" strokeWidth="1.400" />
                      <path d="M17 13 13 12.500 15 10Z" fill="#cf2222" />
                      <path d="M1 9V14H5V11L9 14 5 17V15" fill="#f08a3c" stroke="#b3561a" strokeWidth=".6" />
                      <path d="M10 16H12M13 16H15M16 16H18" stroke="#111" strokeWidth="2" />
                    </svg>
                  </ToolButton>
                  <SplitButton>
                    <BareButton type="button" aria-label="Dynamic CSYS">
                      <svg width="22" height="24" viewBox="0 0 22 24">
                        <path d="M3 2V11M6 14 15 10M6 16 15 19" stroke="#555" fill="none" />
                        <g fill="#c2201a">
                          <circle cx="3" cy="15" r="2.300" />
                          <circle cx="18.500" cy="9.500" r="2.300" />
                          <circle cx="18.500" cy="20" r="2.300" />
                        </g>
                      </svg>
                    </BareButton>
                    <BareButton type="button" aria-label="More CSYS types">
                      <Caret color="#2f7ba6" small />
                    </BareButton>
                  </SplitButton>
                </PickRow>

                <Collapsed title="Electromagnetic Forces" />
                <Group>
                  <GroupHead>
                    <h4>Conductor</h4>
                    <BareButton type="button" aria-label="Collapse Conductor">
                      <Chevron up />
                    </BareButton>
                  </GroupHead>
                  <GroupBody>
                    <Row $split={150}>
                      <label htmlFor="model">Model</label>
                      <SelectWrap>
                        <select id="model">
                          <option>Laminated, Stack in Z</option>
                        </select>
                        <Caret />
                      </SelectWrap>
                    </Row>
                    <Row $split={150}>
                      <label htmlFor="sheet">Thickness of one Sheet</label>
                      <UnitField>
                        <input id="sheet" defaultValue="0.3" />
                        <SelectWrap>
                          <select aria-label="Unit">
                            <option>mm</option>
                          </select>
                          <Caret small />
                        </SelectWrap>
                        <BareButton type="button" aria-label="Formula">
                          <Caret />
                        </BareButton>
                      </UnitField>
                    </Row>
                  </GroupBody>
                </Group>
                <Collapsed title="Rigid Body Motion" />
                <Collapsed title="Mechanical Deformation" />
              </Rows>
            </Panel>
          </Panels>

          <Actions>
            <ActionButton type="submit" $primary>
              OK
            </ActionButton>
            <ActionButton type="button">Cancel</ActionButton>
          </Actions>
        </Dialog>

        <Viewport>
          <Model />
        </Viewport>
      </Page>
    </>
  );
}
